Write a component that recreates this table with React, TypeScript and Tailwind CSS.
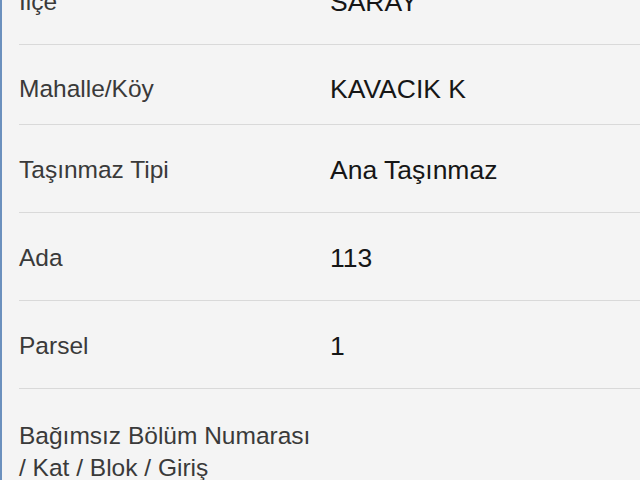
const rows: { label: string[]; value?: string; h: string }[] = [
  { label: ['İlçe'], value: 'SARAY', h: 'h-[88px] pt-[3px]' },
  { label: ['Mahalle/Köy'], value: 'KAVACIK K', h: 'h-[80px] pt-[10px]' },
  { label: ['Taşınmaz Tipi'], value: 'Ana Taşınmaz', h: 'h-[88px] pt-[3px]' },
  { label: ['Ada'], value: '113', h: 'h-[88px] pt-[3px]' },
  { label: ['Parsel'], value: '1', h: 'h-[88px] pt-[3px]' },
];

function Row({ label, value, h }: { label: string[]; value?: string; h: string }) {
  return (
    <div className={`flex items-center border-b border-[#d9d9d9] ${h}`}>
      <div className="w-[311px] shrink-0 text-[24.5px] leading-none text-[#3a3a3a]">
        {label.join(' ')}
      </div>
      <div className="text-[26.5px] leading-none text-[#161616]">{value}</div>
    </div>
  );
}

export default function App() {
  return (
    <div
      className="h-[480px] w-[640px] overflow-hidden bg-[#f4f4f4] border-l-2 border-[#6b90bd]"
      style={{ fontFamily: '"Liberation Sans", Arial, sans-serif' }}
    >
      <div className="-mt-[43px] pl-[17px]">
        {rows.map((r) => (
          <Row key={r.label[0]} {...r} />
        ))}
        <div className="pt-[31px] text-[24.5px] leading-[32px] text-[#3a3a3a]">
          <div>Bağımsız Bölüm Numarası</div>
          <div>/ Kat / Blok / Giriş</div>
        </div>
      </div>
    </div>
  );
}
